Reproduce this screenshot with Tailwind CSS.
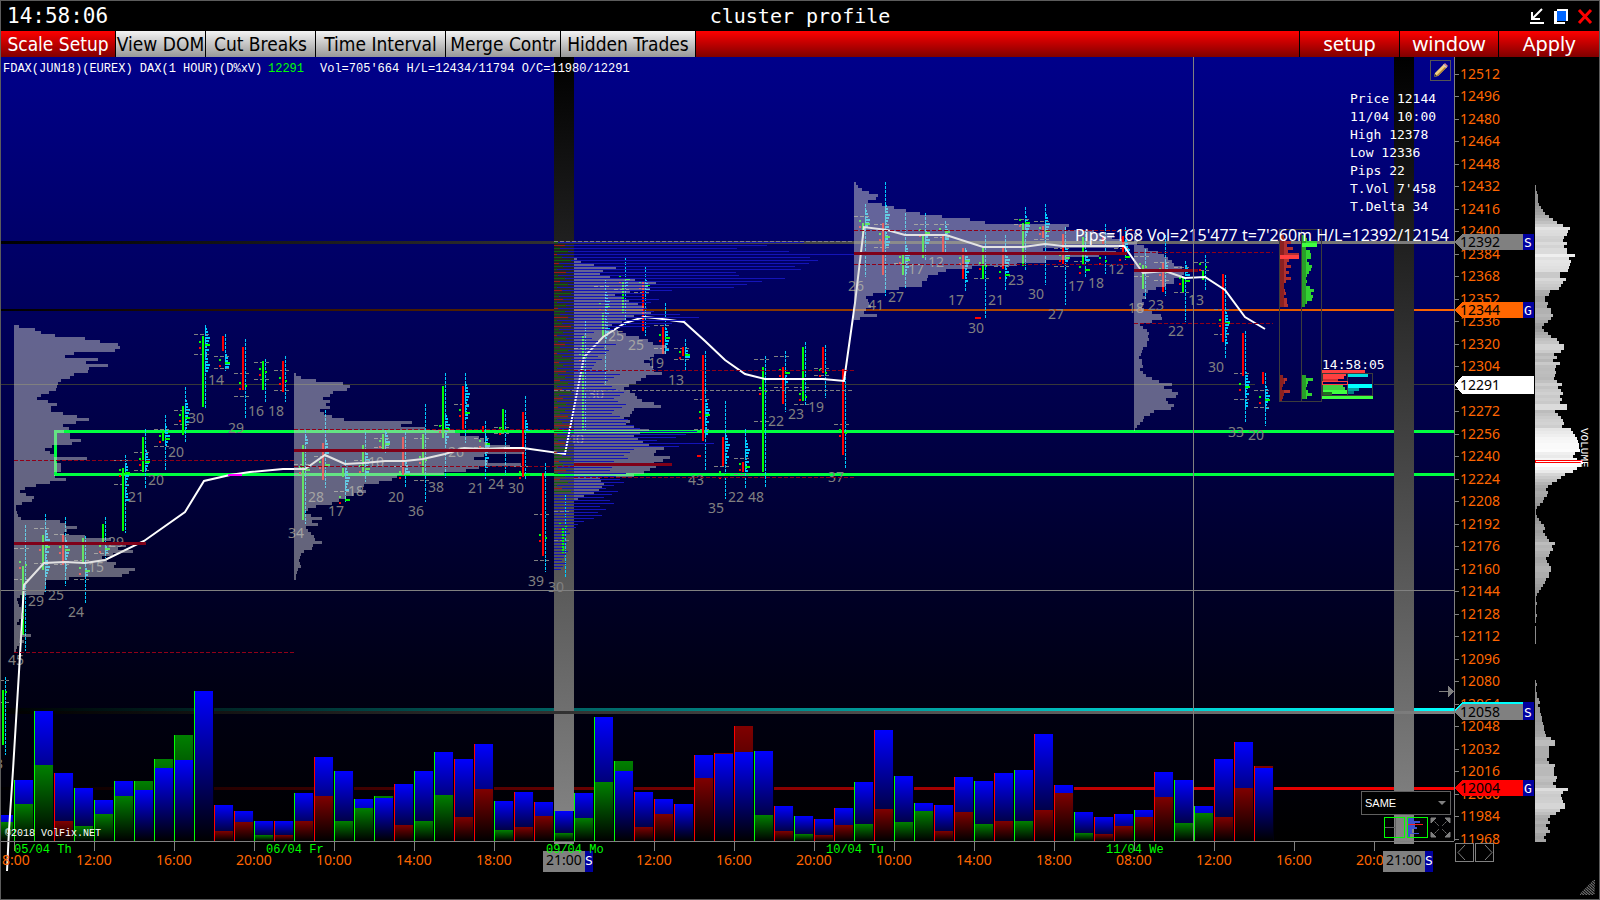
<!DOCTYPE html>
<html lang="en">
<head>
    <meta charset="UTF-8">
    <title>cluster profile</title>
    <script src="https://cdn.jsdelivr.net/npm/@tailwindcss/browser@4"></script>
</head>
<body class="flex flex-col min-h-screen overflow-hidden bg-black border border-[#5c5c5c] font-['Noto_Sans',sans-serif] text-white">

    <!-- title bar -->
    <header class="grid grid-cols-[1fr_auto_1fr] items-center h-[30px] px-[6px] font-['DejaVu_Sans_Mono',monospace]">
        <time class="text-[21px] leading-[28px]">14:58:06</time>
        <h1 class="text-[20px] leading-[28px]">cluster profile</h1>
        <div class="flex justify-end gap-[8px]">
            <button aria-label="Minimize">
                <svg width="16" height="16" viewBox="0 0 16 16" fill="none" stroke="#fff" stroke-width="2"><path d="M1 15H15M13 1L4 10M3 4V11H11"/></svg>
            </button>
            <button aria-label="Maximize">
                <svg width="16" height="16" viewBox="0 0 16 16"><path d="M4 1H15V13H4Z" fill="#fff"/><path d="M1 3H4V14H12V16H1Z" fill="#fff"/><path d="M4 3H13V13H4Z" fill="#06f"/></svg>
            </button>
            <button aria-label="Close">
                <svg width="16" height="16" viewBox="0 0 16 16" stroke="#f00" stroke-width="3"><path d="M2 2L14 15M14 2L2 15"/></svg>
            </button>
        </div>
    </header>

    <!-- toolbar -->
    <nav class="flex h-[26px] bg-linear-to-b from-[#ff0000] to-[#800000] text-[20px] leading-[26px] whitespace-nowrap">
        <div class="flex font-['DejaVu_Sans_Condensed','Noto_Sans',sans-serif] text-[19px] text-black">
            <button class="w-[115px] border-r border-black text-white">Scale Setup</button>
            <button class="w-[90px] border-r border-black bg-linear-to-b from-[#f4f4f4] to-[#989898]">View DOM</button>
            <button class="w-[110px] border-r border-black bg-linear-to-b from-[#f4f4f4] to-[#989898]">Cut Breaks</button>
            <button class="w-[130px] border-r border-black bg-linear-to-b from-[#f4f4f4] to-[#989898]">Time Interval</button>
            <button class="w-[115px] border-r border-black bg-linear-to-b from-[#f4f4f4] to-[#989898]">Merge Contr</button>
            <button class="w-[135px] border-r border-black bg-linear-to-b from-[#f4f4f4] to-[#989898]">Hidden Trades</button>
        </div>
        <div class="flex-1"></div>
        <button class="w-[100px] border-l border-black">setup</button>
        <button class="w-[99px] border-l border-black">window</button>
        <button class="w-[101px] border-l border-black">Apply</button>
    </nav>

    <main class="grid grid-cols-[1453fr_81fr_64fr]">
        <section class="relative">
            <svg id="chart" class="block w-full" viewBox="1 57 1453 842" shape-rendering="crispEdges">
                <defs>
                    <linearGradient id="sky" x2="0" y2="1"><stop stop-color="#00008a"/><stop offset=".45" stop-color="#00004a"/><stop offset=".8" stop-color="#000014"/><stop offset="1" stop-color="#000"/></linearGradient>
                    <linearGradient id="band" x2="0" y2="1"><stop stop-color="#000"/><stop offset="1" stop-color="#868686"/></linearGradient>
                    <linearGradient id="blue" x2="0" y2="1"><stop stop-color="#00f"/><stop offset="1" stop-color="#000"/></linearGradient>
                    <linearGradient id="green" x2="0" y2="1"><stop stop-color="#008000"/><stop offset="1" stop-color="#000"/></linearGradient>
                    <linearGradient id="red" x2="0" y2="1"><stop stop-color="#800000"/><stop offset="1" stop-color="#000"/></linearGradient>
                    <linearGradient id="toGrey"><stop stop-color="#000"/><stop offset="1" stop-color="#808080"/></linearGradient>
                    <linearGradient id="toOrange"><stop stop-color="#000"/><stop offset="1" stop-color="#f60"/></linearGradient>
                    <linearGradient id="toCyan"><stop stop-color="#000"/><stop offset="1" stop-color="#0ff"/></linearGradient>
                    <linearGradient id="toRed"><stop stop-color="#000"/><stop offset="1" stop-color="#f00"/></linearGradient>
                </defs>
            </svg>

            <p class="absolute left-[2px] top-[4px] flex font-['Liberation_Mono',monospace] text-[12px] leading-[16px] whitespace-pre">
                <span class="w-[265px]">FDAX(JUN18)(EUREX) DAX(1 HOUR)(D%xV)</span>
                <span class="w-[52px] text-[#00ff00]">12291</span>
                <span>Vol=705'664 H/L=12434/11794 O/C=11980/12291</span>
            </p>

            <button aria-label="Draw" class="absolute right-[3px] top-[3px] w-[21px] h-[21px] border border-[#555] flex items-center justify-center">
                <svg width="17" height="17" viewBox="0 0 17 17"><path d="M2 15L3 11L12 2L15 5L6 14Z" fill="#f0d080"/><path d="M2 15L3 12L5 14Z" fill="#333"/><path d="M6 14L15 5L14 4L4 14Z" fill="#b08030"/><path d="M11 3L14 6L15 5L12 2Z" fill="#ccc"/><path d="M12 2L13 1L16 4L15 5Z" fill="#d88"/></svg>
            </button>

            <div class="absolute right-[7px] top-[33px] w-[97px] font-['DejaVu_Sans_Mono',monospace] text-[13px] leading-[18px] whitespace-nowrap">
                <p>Price 12144</p>
                <p>11/04 10:00</p>
                <p>High 12378</p>
                <p>Low 12336</p>
                <p>Pips 22</p>
                <p>T.Vol 7'458</p>
                <p>T.Delta 34</p>
            </div>

            <!-- scale mode and view buttons -->
            <div class="absolute right-[3px] bottom-[61px] w-[90px]">
                <div class="relative">
                    <select aria-label="Scale mode" class="block w-full h-[24px] bg-black border border-[#606060] pl-[3px] appearance-none font-['Liberation_Sans',sans-serif] text-[11px] text-white">
                        <option>SAME</option>
                    </select>
                    <svg class="absolute right-[5px] top-[10px]" width="8" height="5"><path d="M0 0H8L4 4Z" fill="#808080"/></svg>
                </div>
                <div class="flex justify-end gap-[2px] pt-[2px]">
                    <button aria-label="Grid" class="w-[21px] h-[21px] border border-[#00ff00]"><svg width="19" height="19"><path d="M0 9.5H10M10.5 0V19" stroke="#606060"/></svg></button>
                    <button aria-label="Profile" class="w-[21px] h-[21px] border border-[#00ff00]"><svg width="19" height="19"><path d="M0 0H6V3H12V5H7V9H9V11H4V15H11V16H2V19H0Z" fill="#3c50d0"/><path d="M0 6.500H15" stroke="#f02020"/></svg></button>
                    <button aria-label="Expand"><svg width="21" height="21" fill="#808080" stroke="#808080"><path d="M1 1H6L1 6ZM20 1V6L15 1ZM1 20V15L6 20ZM20 20H15L20 15Z"/><path d="M3 3L9 9M18 3L12 9M3 18L9 12M18 18L12 12" stroke-dasharray="2 1"/></svg></button>
                </div>
            </div>
        </section>

        <section class="relative">
            <svg id="prices" class="block w-full" viewBox="1454 57 81 842" shape-rendering="crispEdges"></svg>
            <div class="absolute left-px bottom-[37px] flex gap-[1px]">
                <button aria-label="Scroll left" class="w-[19px] h-[19px] border border-[#808080]"><svg width="17" height="17" fill="none" stroke="#808080"><path d="M9 1L2 8.500L9 16"/></svg></button>
                <button aria-label="Scroll right" class="w-[19px] h-[19px] border border-[#808080]"><svg width="17" height="17" fill="none" stroke="#808080"><path d="M9 1L16 8.500L9 16"/></svg></button>
            </div>
        </section>

        <section class="relative">
            <svg id="volume" class="block w-full" viewBox="1535 57 64 842" shape-rendering="crispEdges"></svg>
            <svg class="absolute right-[4px] bottom-[4px]" width="15" height="15"><path d="M0 15L15 0M3 15L15 3M6 15L15 6M9 15L15 9M12 15L15 12" stroke="#808080" stroke-width="2" stroke-dasharray="1 1"/></svg>
        </section>
    </main>

    <script>
        const NS = 'http://www.w3.org/2000/svg';
        const chart = document.getElementById('chart');
        const prices = document.getElementById('prices');
        const volume = document.getElementById('volume');
        const G = '#00ff00', R = '#ff0000', SANS = "'Noto Sans', sans-serif", MONO = "'DejaVu Sans Mono', monospace";
        const SMALL = "'Liberation Mono', monospace";

        function add(parent, tag, attrs) {
            const el = document.createElementNS(NS, tag);
            for (const key in attrs) el.setAttribute(key, attrs[key]);
            parent.appendChild(el);
            return el;
        }
        function rect(parent, x, y, w, h, fill, opacity = 1) {
            return add(parent, 'rect', { x, y, width: w, height: h, fill, opacity });
        }
        function text(parent, x, y, str, fill, size, font, anchor = 'start') {
            add(parent, 'text', { x, y, fill, 'font-size': size, 'font-family': font, 'text-anchor': anchor }).textContent = str;
        }
        function line(parent, x1, y1, x2, y2, stroke, dash = 'none') {
            add(parent, 'path', { d: `M${x1} ${y1 + .5}H${x2}`, stroke, 'stroke-dasharray': dash });
        }

        // sky and price lines
        rect(chart, 1, 57, 1454, 784, 'url(#sky)');
        rect(chart, 1, 309, 1454, 2, 'url(#toOrange)');
        rect(chart, 1, 708, 1454, 3, 'url(#toCyan)');
        rect(chart, 1, 787, 1454, 3, 'url(#toRed)');

        // session breaks, the value box runs over the first and under the second
        rect(chart, 554, 57, 20, 787, 'url(#band)');
        rect(chart, 55, 430, 1400, 3, '#00ff40');
        rect(chart, 55, 473, 1400, 3, '#00ff40');
        rect(chart, 54, 430, 3, 46, '#00ff40');
        rect(chart, 1394, 57, 20, 787, 'url(#band)');

        rect(chart, 1, 241, 1454, 3, 'url(#toGrey)');
        rect(chart, 1, 711, 1454, 3, 'url(#toGrey)');
        rect(chart, 1, 384, 1254, 1, '#383838');
        rect(chart, 1374, 384, 81, 1, '#383838');

        // volume cluster of the selected range
        const cluster = [250,213,183,235,300,256,264,255,241,247,182,185,231,208,193,180,118,95,90,105,97,88,93,100,126,145,132,118,96,60,40,30,38,44,62,50,55,52,44,48,42,40,38,52,66,60,54,50,58,62,70,66,60,64,72,68,60,58,66,74,72,80,86,143,132,122,103,160,125,80,76,70,74,60,64,58,56,72,62,66,70,60,52,64,58,50,56,60,46,52,44,48,40,30,24,22,14,16,12,10,13,11,9,14,12,10,8,12,9,7];
        const small = [4, 11, 6, 14, 3, 8, 17, 5, 9, 3, 12];
        function drawCluster() {
            cluster.forEach((w, k) => {
                rect(chart, 554, 242 + k * 3, w, 1, '#1414b8');
                if (k < 84) rect(chart, 554, 242 + k * 3, small[k % 11], 1, k % 3 == 1 ? '#a01818' : '#0c640c');
            });
        }

        // bars: x index, colour, body top/bottom, range top/bottom, area marks, label, thick part
        const bars = [
            [-1,G,690,745,677,755,[680,702],'',0,0],
            [0,G,566,635,525,651,[548,579],'45',0,0],
            [1,G,535,570,514,592,[528,563],'29',530,578],
            [2,R,535,565,517,586,[534,564],'25',540,570],
            [3,G,538,564,536,603,[560,579],'24',568,576],
            [4,G,524,542,517,558,[542,553],'15',546,553],
            [5,G,468,531,455,533,[460,484],'29',463,500],
            [6,G,437,472,429,488,[452,470],'21',450,470],
            [7,G,431,441,415,471,[429,446],'20',426,446],
            [8,G,406,435,387,443,[410,424],'20',400,430],
            [9,G,336,407,325,409,[334,354],'30',328,372],
            [10,R,336,351,334,371,[356,368],'14',354,368],
            [11,R,347,390,339,419,[373,396],'29',0,0],
            [12,G,361,390,359,402,[362,379],'16',0,0],
            [13,R,361,392,356,402,[370,390],'18',0,0],
            [14,G,445,520,430,524,[464,474],'34',436,443],
            [15,R,443,480,410,488,[456],'28',440,455],
            [16,G,468,477,460,502,[491],'17',468,492],
            [17,G,445,472,432,482,[460],'18',450,472],
            [18,G,434,449,430,453,[438,447],'10',432,447],
            [19,R,437,475,432,488,[466],'20',462,474],
            [20,G,434,474,404,502,[438,480],'36',0,0],
            [21,G,386,438,373,478,[425,430],'38',415,445],
            [22,R,386,430,373,443,[404],'26',384,420],
            [23,R,426,432,421,479,[438,447],'21',436,468],
            [24,G,409,432,410,475,[427,433],'24',0,0],
            [25,R,412,477,396,479,[466],'30',420,430],
            [26,R,473,556,463,572,[514,560],'39',0,0],
            [27,G,528,553,494,578,[511,540],'30',0,0],
            [28,G,336,430,320,430,[348],'40',0,0],
            [29,G,313,337,280,385,[286,323],'30',292,340],
            [30,G,282,313,258,327,[266,289],'25',278,286],
            [31,R,282,331,266,336,[275,292],'25',280,290],
            [32,R,327,354,303,354,[325,348],'19',328,352],
            [33,R,347,356,339,371,[348,359],'13',347,358],
            [34,R,355,441,351,471,[399,429],'43',400,435],
            [35,R,437,466,401,499,[466],'35',435,465],
            [36,R,462,472,429,488,[458,474],'22',440,472],
            [37,G,367,472,356,488,[359,421],'48',0,0],
            [38,R,367,404,351,412,[356,387],'22',375,384],
            [39,G,347,401,342,405,[387,404],'23',0,0],
            [40,R,347,373,345,398,[368,375],'19',0,0],
            [41,R,369,455,369,468,[424],'37',0,0],
            [42,G,223,238,204,277,[216,230],'26',210,226],
            [43,R,223,275,182,296,[224,247],'41',205,245],
            [44,G,254,275,213,288,[254,263],'27',245,275],
            [45,G,236,258,213,260,[224],'17',230,245],
            [46,R,236,252,221,253,[224,237],'12',226,240],
            [47,R,248,279,248,291,[252],'17',250,283],
            [48,G,248,279,235,319,[252,278],'30',0,0],
            [49,R,248,269,235,291,[266],'21',250,280],
            [50,G,223,266,207,271,[219,224],'23',216,236],
            [51,R,226,238,204,285,[221,239],'30',214,238],
            [52,R,234,264,227,305,[248,266],'27',245,262],
            [53,G,237,264,230,277,[261],'17',250,262],
            [54,R,237,244,224,274,[252],'18',0,0],
            [55,R,236,253,227,260,[248],'12',240,250],
            [56,G,265,289,249,299,[256,276],'18',0,0],
            [57,R,263,292,235,296,[262,280],'23',262,272],
            [58,G,278,292,261,322,[267,292],'22',265,275],
            [59,G,271,280,255,291,[262,270],'13',0,0],
            [60,R,274,342,275,358,[309,334],'30',312,345],
            [61,R,333,376,331,423,[373,399],'33',372,408],
            [62,R,372,384,373,426,[390,407],'20',386,408]
        ];
        const thick = [2, 3, 3, 5, 4, 3, 2, 4, 2];
        bars.forEach(([i, color, top, bottom, high, low, marks, label, t0, t1]) => {
            const x = 14 + 20 * i;
            add(chart, 'path', { d: `M${x + 11.5} ${high}V${low}`, stroke: '#00ccff', 'stroke-dasharray': '3 1' });
            for (let y = t0, k = 0; y < t1; y += 3, k++) rect(chart, x + 11, y, thick[k % 9], 2, '#00ccff');
            marks.forEach(y => line(chart, x, y, x + 15, y, '#808080', '4 2'));
            const poc = Math.round((marks[0] + (marks[1] || marks[0] + 16)) / 2);
            rect(chart, x + 5, poc - 3, 2, 2, G);
            rect(chart, x + 5, poc + 3, 2, 2, R);
            rect(chart, x + 11, poc, t0 ? 5 : 2, 2, G);
            rect(chart, x + 8, top, 2, bottom - top, color);
            if (label) text(chart, x - 6, low + 14, label, '#808080', 14, SANS);
        });
        rect(chart, 975, 317, 6, 2, R);
        rect(chart, 697, 455, 4, 2, R);

        // volume histogram: side colour and delta colour, volume top, delta top
        const histogram = [
            'gg815,822','gg780,804','gg711,765','rr773,821','gg788,826','gg800,814','gg781,796','gg790,781','gg768,759','gg760,735',
            'gg691,841','rr805,831','rr811,822','gg821,835','rr821,835','gr793,821','rr757,796','gg771,821','gg799,808','gg798,796',
            'rr784,825','gg771,821','gg752,795','rr759,817','rr744,789','gg801,830','rr792,827','rr802,816','gg811,833','gg793,818',
            'gg717,782','gg771,761','rr792,827','rr799,814','rr804,841','rr755,778','rr754,753','rr752,726','gg751,815','rr806,831',
            'gg816,834','rr819,835','rr808,825','gg782,824','rr730,809','gg776,822','gg803,811','rr805,831','rr777,812','gg781,824',
            'rr773,821','gg770,821','rr734,810','rr785,793','gg812,833','rr817,834','rr814,826','gr810,817','rr772,797','gg780,823',
            'gg806,813','rr759,817','rr742,788','rr768,766'
        ];
        histogram.forEach((row, k) => {
            const x = 14 + 20 * (k - 1);
            const [vol, delta] = row.slice(2).split(',').map(Number);
            const fill = row[1] == 'g' ? 'url(#green)' : 'url(#red)';
            const top = Math.min(vol, delta);
            rect(chart, x, top, 20, 841 - top, '#000010');
            if (delta < vol) rect(chart, x + 1, delta, 18, 841 - delta, fill);
            rect(chart, x + 1, vol, 18, 841 - vol, 'url(#blue)');
            if (delta > vol) rect(chart, x + 1, delta, 18, 841 - delta, fill);
            rect(chart, x, top, 1, 841 - top, row[0] == 'g' ? G : R);
        });

        // moving average
        add(chart, 'polyline', {
            points: '7,871 9,830 13,770 19,672 24,585 44,563 65,562 85,563 105,560 144,541 185,512 204,481 230,475 250,472 283,469 305,469 325,455 345,464 363,463 385,461 405,461 423,459 445,454 464,448 483,449 505,448 523,448 565,454 584,357 603,337 625,323 644,317 655,318 684,322 705,341 725,360 745,374 765,379 823,379 844,381 855,303 864,227 887,230 905,235 946,235 983,247 1023,247 1045,244 1063,246 1124,246 1143,273 1165,271 1185,278 1205,277 1225,290 1245,317 1265,329',
            fill: 'none', stroke: '#fff', 'stroke-width': 2, 'shape-rendering': 'auto'
        });
        rect(chart, 228, 474, 14, 2, '#f0f');

        // day profiles, one width per 3px row
        const profiles = [
            [14, 325, [5,21,27,41,71,86,104,106,101,60,51,84,72,94,75,74,60,56,47,44,43,42,35,27,23,34,43,37,37,49,63,75,62,49,55,50,56,56,67,58,38,31,36,40,73,42,47,47,47,40,41,52,36,22,11,6,12,20,18,8,2,2,3,4,7,46,52,63,53,50,71,97,90,112,104,119,99,88,93,102,100,121,115,108,55,32,32,31,31,30,6,3,4,5,7,7,9,10,5,3,6,6,9,17,8,10,5,3,2]],
            [294, 373, [2,7,22,49,56,53,39,36,29,36,32,36,26,30,38,50,118,107,131,161,166,185,190,193,216,210,230,190,180,194,227,185,172,150,103,98,85,70,67,72,60,52,45,38,22,14,11,17,28,18,24,12,14,17,20,21,28,19,18,10,7,6,5,6,7,4,3,2,2]],
            [574, 258, [3,7,20,42,29,26,36,61,82,74,76,56,41,48,55,64,70,69,77,60,52,48,38,34,44,52,65,74,79,92,90,92,80,76,70,76,79,80,88,72,67,62,55,50,56,61,63,68,80,87,60,58,56,50,56,52,60,75,66,60,64,69,75,90,82,80,96,89,80,82,76,70,60,26,27,30,28,25,20,10,4]],
            [854, 182, [2,4,8,15,24,22,14,28,40,52,66,88,116,131,215,212,240,260,258,268,280,265,189,262,245,215,192,163,118,92,84,74,73,68,68,45,31,19,12,14,15,17,12,10,23,6]],
            [1134, 233, [2,2,4,3,10,14,24,30,34,38,40,48,56,50,48,40,40,32,22,14,9,12,8,10,8,10,18,27,28,18,6,9,13,15,14,15,13,13,9,8,7,5,8,8,9,6,9,12,18,25,38,30,38,44,42,32,34,40,37,20,16,10,9,6,3,1]]
        ];
        profiles.forEach(([x, y, rows]) => {
            let d = `M${x} ${y}`;
            rows.forEach(w => d += `H${x + w}v3`);
            add(chart, 'path', { d: d + `H${x}Z`, fill: '#c8c8c8', opacity: .5 });
        });
        drawCluster();

        // point of control and value area of each day
        [[14,542,132],[294,449,231],[574,463,98],[854,252,273],[1134,269,64]].forEach(([x, y, w]) => rect(chart, x, y, w, 3, '#800018'));
        [[14,294,460],[14,294,652],[294,574,429],[294,574,466],[574,854,370],[574,854,477],[854,1134,230],[854,1134,264],[1134,1273,252],[1134,1273,323]]
            .forEach(([a, b, y]) => line(chart, a, y, b, y, '#900018', '4 2'));
        line(chart, 554, 241, 854, 241, '#808080', '4 2');
        line(chart, 554, 390, 854, 390, '#808080', '4 2');

        // delta boxes
        function rows(x, y, list, fill, dark) {
            list.forEach((w, k) => {
                rect(chart, x, y + k * 3, w, 3, fill);
                rect(chart, x, y + k * 3, Math.min(w, 4), 3, dark);
            });
        }
        rows(1280, 235, [4,5,11,7,13,8,19,12,9,7,11,6,9,6,11,6,4,4,5,6,4,7,7,8], '#b03030', '#8c2020');
        rows(1302, 235, [4,5,15,7,4,8,9,9,5,7,10,9,7,5,4,5,4,8,12,9,11,10,5,3], '#32d232', '#28a028');
        rows(1280, 375, [3,7,5,3,2,10,4,3,2], '#b03030', '#8c2020');
        rows(1302, 375, [4,11,6,5,4,6,10,5], '#32d232', '#28a028');
        rect(chart, 1280, 255, 19, 4, '#ff4040');
        rect(chart, 1302, 243, 15, 4, '#40ff40');
        add(chart, 'path', { d: 'M1279.5 229.500H1321.500V401.500H1279.500ZM1301.500 230V401', fill: 'none', stroke: '#3c3c3c' });
        [[1322,370,43,3,'#ff4040'],[1323,373,23,3,'#ff4040'],[1323,376,21,3,'#ff4040'],[1323,379,15,3,'#d03030'],
         [1323,384,20,3,'#40d040'],[1323,387,22,3,'#40d040'],[1323,390,24,4,'#40ff40'],[1323,392,9,3,'#207020'],[1322,396,51,3,'#40ff40'],
         [1348,373,20,4,'#00e0e0'],[1348,384,25,4,'#00ffff'],[1348,388,11,3,'#00a0a0'],[1348,391,6,3,'#008080']].forEach(r => rect(chart, ...r));
        add(chart, 'path', { d: 'M1322.5 373.500H1372.500V395.500H1322.500ZM1347.500 374V395', fill: 'none', stroke: '#3c3c3c' });
        add(chart, 'path', { d: 'M1322.5 381.500H1347.500V384.500H1322.500Z', fill: 'none', stroke: '#ff4040' });
        text(chart, 1322, 369, '14:58:05', '#fff', 13, MONO);
        text(chart, 1449, 241, "Pips=168 Vol=215'477 t=7'260m H/L=12392/12154", '#fff', 16, SANS, 'end');

        // crosshair
        rect(chart, 1, 590, 1454, 1, '#808080');
        rect(chart, 1193, 57, 1, 784, '#808080');
        add(chart, 'path', { d: 'M1439 691.500H1449', stroke: '#808080' });
        add(chart, 'path', { d: 'M1448 686L1454 691.500L1448 697Z', fill: '#808080' });
        text(chart, 5, 836, '©2018 VolFix.NET', '#fff', 10, SMALL);
        text(chart, -5, 769, '3', '#808080', 14, SANS);

        // time axis
        rect(chart, 1, 841, 1454, 1, '#808080');
        rect(chart, 14, 842, 1, 9, '#808080');
        text(chart, 2, 865, '8:00', '#ff6600', 14, SANS);
        [[94,'12:00'],[174,'16:00'],[254,'20:00'],[334,'10:00'],[414,'14:00'],[494,'18:00'],[654,'12:00'],[734,'16:00'],[814,'20:00'],
         [894,'10:00'],[974,'14:00'],[1054,'18:00'],[1134,'08:00'],[1214,'12:00'],[1294,'16:00'],[1374,'20:00']].forEach(([x, label]) => {
            rect(chart, x, 842, 1, 9, '#808080');
            text(chart, x, 865, label, '#ff6600', 14, SANS, 'middle');
        });
        [543, 1383].forEach(x => {
            rect(chart, x, 851, 42, 21, '#808080');
            rect(chart, x + 42, 851, 8, 21, '#0000a0');
            text(chart, x + 21, 865, '21:00', '#000', 14, SANS, 'middle');
            text(chart, x + 42, 865, 'S', '#fff', 13, MONO);
        });
        [[14,'05/04 Th'],[266,'06/04 Fr'],[546,'09/04 Mo'],[826,'10/04 Tu'],[1106,'11/04 We']].forEach(([x, label]) => text(chart, x, 853, label, G, 12, SMALL));

        // price axis
        rect(prices, 1454, 57, 1, 784, '#808080');
        for (let p = 12512; p >= 11968; p -= 16) {
            const y = Math.round(74 + (12512 - p) * 1.406);
            rect(prices, 1455, y, 4, 1, '#808080');
            text(prices, 1460, y + 5, p, '#ff6600', 14, SANS);
        }
        function tag(y, half, end, fill, label, mark) {
            add(prices, 'path', { d: `M1455 ${y}L1462 ${y - half}H${end}V${y + half}H1462Z`, fill });
            text(prices, 1460, y + 5, label, '#000', 14, SANS);
            if (mark) {
                rect(prices, 1523, y - half, 11, half * 2, '#0000a0');
                text(prices, 1524, y + 5, mark, '#fff', 13, MONO);
            }
        }
        tag(242, 8, 1523, '#808080', '12392', 'S');
        tag(310, 8, 1523, '#ff6600', '12344', 'G');
        tag(385, 9, 1534, '#ffffff', '12291');
        tag(710, 8, 1523, '#00ffff', '', 'S');
        tag(712, 8, 1523, '#808080', '12058', 'S');
        tag(788, 8, 1523, '#ff0000', '12004', 'G');

        // total volume profile
        const total = [1,1,2,3,3,3,4,6,8,10,14,18,22,28,35,33,32,29,28,32,29,32,32,40,34,36,35,34,33,25,25,31,28,26,24,15,14,10,10,13,12,16,16,18,16,13,9,7,9,13,16,22,24,29,29,26,19,22,18,25,21,20,21,20,19,22,27,23,26,28,25,27,25,32,32,20,23,26,28,29,27,36,38,40,42,43,44,44,45,40,38,42,48,46,42,38,30,26,22,17,13,11,13,12,9,8,5,2,1,1,2,4,6,9,10,8,10,12,14,20,17,18,15,14,11,12,14,16,16,14,14,11,10,8,6,4,2,1,1,2,1,1,1,2,1,1,0,1,1,1,1,1,1];
        const low = [1,2,1,1,2,2,4,5,3,5,5,6,7,7,8,9,9,10,11,16,20,20,14,14,14,14,12,14,20,19,19,19,22,21,18,21,33,28,26,27,28,30,30,25,21,15,13,15,11,13,15,11,9,11];
        function shade(w, max) {
            const c = Math.round(136 + 119 * Math.min(w / max, 1));
            return `rgb(${c},${c},${c})`;
        }
        total.forEach((w, k) => rect(volume, 1535, 185 + k * 3, w, 3, shade(w, 46)));
        low.forEach((w, k) => rect(volume, 1535, 680 + k * 3, w, 3, shade(w, 46)));
        add(volume, 'path', { d: 'M1535.5 460.500H1582.500V462.500H1535.500Z', fill: 'none', stroke: '#f00' });
        add(volume, 'text', { transform: 'translate(1581 428) rotate(90)', fill: '#fff', 'font-size': 11, 'font-family': SMALL }).textContent = 'VOLUME';
    </script>
</body>
</html>
